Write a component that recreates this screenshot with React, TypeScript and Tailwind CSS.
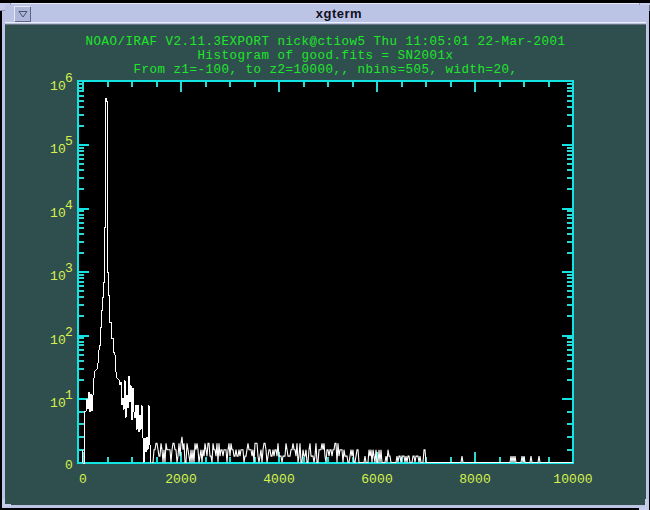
import React from "react";

const AXIS = "#12e4e4";
const TICK = "#2cd8d4";
const yOf = (n: number) => 462.5 - n * 63.5;
const xOf = (v: number) => 82 + v * 0.049;

const majorY = [1, 2, 3, 4, 5].map((n) => yOf(n));
const minorY: number[] = [];
[2, 4, 6, 8].forEach((c) => minorY.push(462.5 - (c / 10) * 63.5));
for (let d = 1; d < 6; d++) {
  for (let c = 2; c <= 9; c++) minorY.push(yOf(d + Math.log10(c)));
}

const xTicks: number[] = [];
for (let v = 0; v <= 9500; v += 500) xTicks.push(v);

const peak: [number, number][] = [
  [81, 463], [81, 450], [82, 463], [83, 463], [83, 412], [85, 411], [86, 399], [87, 409], [88, 392],
  [89, 412], [90, 394], [91, 411], [92, 395], [92, 382], [93, 378], [94, 371], [96, 369], [97, 363],
  [98, 350], [98, 345], [99, 345], [99, 327], [100, 327], [100, 310], [101, 310], [101, 297], [102, 297], [102, 282],
  [103, 282], [103, 227], [104, 227], [104, 98], [105, 98], [105, 101], [106, 101], [106, 272], [107, 272], [107, 295],
  [108, 295], [108, 322], [110, 322], [110, 338], [112, 338], [112, 350], [114, 355],
  [115, 372], [116, 378], [118, 380], [119, 385], [120, 382], [121, 405], [122, 398], [123, 410], [124, 380],
  [125, 418], [126, 395], [127, 408], [128, 376], [129, 402], [130, 385], [131, 420], [132, 388], [133, 412],
  [134, 418], [135, 405], [136, 430], [137, 405], [138, 432], [139, 415], [140, 430], [141, 405], [142, 438],
  [143, 463], [144, 438], [145, 452], [146, 437], [147, 450], [148, 405], [149, 445], [150, 463],
];

const hash = (x: number) => {
  const s = Math.sin(x * 12.9898) * 43758.5453;
  return s - Math.floor(s);
};
const special: Record<number, number> = {
  181: 4, 165: 3, 196: 3, 323: 3, 334: 3, 423: 2, 424: 2, 461: 1, 510: 1, 512: 1, 514: 1, 521: 1, 523: 1, 530: 1, 538: 1,
};
const noise: [number, number][] = [];
for (let x = 151; x <= 572; x++) {
  const r = hash(x);
  let v = 0;
  if (special[x] !== undefined) v = special[x];
  else if (x < 300) v = r < 0.22 ? 0 : r < 0.47 ? 1 : r < 0.8 ? 2 : 3;
  else if (x < 358) v = r < 0.38 ? 0 : r < 0.68 ? 1 : r < 0.92 ? 2 : 3;
  else if (x < 364) v = 0;
  else if (x < 425) v = r < 0.55 ? 0 : r < 0.88 ? 1 : 2;
  noise.push([x, 462.5 - v * 6.4]);
}
const toPoints = (p: [number, number][]) => p.map(([x, y]) => `${x},${y}`).join(" ");

const yLabels = [
  { n: 1, e: "1" }, { n: 2, e: "2" }, { n: 3, e: "3" }, { n: 4, e: "4" }, { n: 5, e: "5" }, { n: 6, e: "6" },
];
const xLabels = [0, 2000, 4000, 6000, 8000, 10000];

const Corner = ({ className }: { className: string }) => (
  <div className={`absolute w-[11px] h-[11px] ${className}`} />
);

export default function App() {
  return (
    <div className="relative w-[650px] h-[510px] bg-black pt-[3px] pb-[2px] pl-[2px] pr-[1px] overflow-hidden">
      <div className="h-full flex flex-col bg-[#bcc4e6] px-[3px] pb-[3px] border-t border-[#e4e8f6]">
        <div className="relative h-[18px] flex items-center justify-center pl-[27px] shrink-0">
          <div className="absolute left-[9px] top-[2px] w-[16px] h-[15px] bg-[#aeb6da] border-t border-l border-[#e6eaf8] flex items-center justify-center shadow-[1px_1px_0_#5c6488]">
            <svg width="10" height="8" viewBox="0 0 10 8">
              <path d="M1 1.5H9L5 7Z" fill="none" stroke="#4a5070" strokeWidth="1" />
            </svg>
          </div>
          <span className="font-['Liberation_Sans'] font-bold text-[13px] tracking-[0.5px] leading-none text-[#101020]">xgterm</span>
        </div>
        <div className="h-[3px] shrink-0 bg-[#bcc4e6] border-t border-[#eef0fa] border-b-[#6a7288] border-b" />
        <div className="flex-1 flex flex-col bg-[#2f4f4f] pt-[10px] items-center">
          <div className="flex flex-col items-center font-['Liberation_Mono'] text-[12.5px] leading-[14px] tracking-[0.5px] text-[#1ee628] whitespace-pre">
            <div>NOAO/IRAF V2.11.3EXPORT nick@ctiow5 Thu 11:05:01 22-Mar-2001</div>
            <div>Histogram of good.fits = SN2001x</div>
            <div>From z1=-100, to z2=10000,, nbins=505, width=20,</div>
          </div>
          <svg width="640" height="428" viewBox="5 77 640 428" className="block shrink-0 overflow-visible font-['Liberation_Mono']">
            <rect x="77" y="81" width="495" height="382" fill="#000" />
            <g stroke={TICK} strokeWidth="2" shapeRendering="crispEdges">
              {minorY.map((y) => (
                <g key={y}>
                  <line x1="78" x2="83" y1={y} y2={y} />
                  <line x1="566" x2="571" y1={y} y2={y} />
                </g>
              ))}
              {xTicks.map((v) => {
                const major = v % 2000 === 0;
                const x = xOf(v);
                return (
                  <g key={v}>
                    <line x1={x} x2={x} y1="82" y2={major ? 92 : 87} />
                    <line x1={x} x2={x} y1="462" y2={major ? 452 : 457} />
                  </g>
                );
              })}
              {majorY.map((y) => (
                <g key={y} stroke={AXIS}>
                  <line x1="78" x2="88" y1={y} y2={y} />
                  <line x1="561" x2="571" y1={y} y2={y} />
                </g>
              ))}
            </g>
            <rect x="77" y="81" width="495" height="382" fill="none" stroke={AXIS} strokeWidth="2" shapeRendering="crispEdges" />
            <polyline points={toPoints(peak)} fill="none" stroke="#ffffff" strokeWidth="1" shapeRendering="crispEdges" />
            <polyline points={toPoints(noise)} fill="none" stroke="#ffffff" strokeWidth="1.1" />
            <g fill="#d6f24a" fontSize="13">
              {yLabels.map(({ n, e }) => (
                <g key={n}>
                  <text x="49" y={yOf(n) + 8} letterSpacing="0.1">10</text>
                  <text x="64" y={yOf(n)}>{e}</text>
                </g>
              ))}
              <text x="64" y="469">0</text>
              {xLabels.map((v) => (
                <text key={v} x={xOf(v)} y="483" textAnchor="middle" letterSpacing="0.1">{v}</text>
              ))}
            </g>
          </svg>
        </div>
      </div>
      <Corner className="left-0 top-0 border-r border-b border-[#8f96b6] bg-[#c6cdea] [clip-path:polygon(0_3px,100%_3px,100%_5px,5px_5px,5px_100%,0_100%)]" />
      <Corner className="right-0 top-0 border-l border-b border-[#8f96b6] bg-[#c6cdea] [clip-path:polygon(0_3px,100%_3px,100%_100%,95%_100%,95%_5px,0_5px)]" />
      <Corner className="left-0 bottom-0 bg-[#c6cdea] [clip-path:polygon(2px_0,5px_0,5px_5px,100%_5px,100%_8px,2px_8px)]" />
      <Corner className="right-0 bottom-0 bg-[#c6cdea] [clip-path:polygon(6px_0,10px_0,10px_100%,0_100%,0_8px,6px_8px)]" />
    </div>
  );
}
